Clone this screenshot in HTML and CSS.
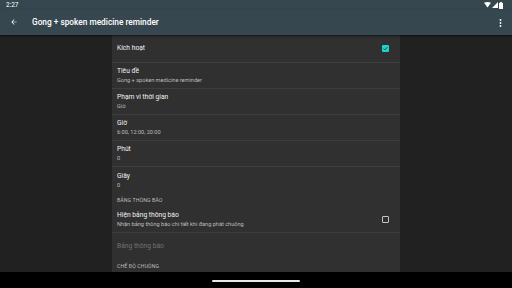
FILE: index.html
```html
<!DOCTYPE html>
<html lang="vi">
<head>
<meta charset="utf-8">
<link rel="stylesheet" href="styles.css">
</head>
<body>
<div class="screen">
  <div class="statusbar">
    <span class="time">2:27</span>
    <span class="sys">
      <svg width="7" height="6" viewBox="0 0 7 6"><path d="M0 0.8 Q3.5 -0.6 7 0.8 L3.5 5.5 Z" fill="#fff"/></svg>
      <svg width="6" height="6" viewBox="0 0 6 6"><path d="M6 0 L6 6 L0 6 Z" fill="#fff"/></svg>
      <svg width="4" height="7" viewBox="0 0 4 7"><rect x="1.2" y="0" width="1.6" height="1" fill="#fff"/><rect x="0" y="0.8" width="4" height="6.2" rx="0.5" fill="#fff"/></svg>
    </span>
  </div>
  <div class="toolbar">
    <svg class="back" width="8" height="8" viewBox="0 0 24 24"><path d="M20 11H7.83l5.59-5.59L12 4l-8 8 8 8 1.41-1.41L7.83 13H20v-2z" fill="#fff"/></svg>
    <span class="title">Gong + spoken medicine reminder</span>
    <svg class="more" width="3" height="8" viewBox="0 0 3 8"><circle cx="1.5" cy="1" r="0.9" fill="#fff"/><circle cx="1.5" cy="4" r="0.9" fill="#fff"/><circle cx="1.5" cy="7" r="0.9" fill="#fff"/></svg>
  </div>
  <div class="content">
    <div class="card">
      <div class="row first">
        <div class="texts"><div class="t">Kích hoạt</div></div>
        <div class="cb checked"><svg width="7" height="7" viewBox="0 0 7 7"><path d="M1.6 3.6 L2.9 4.9 L5.4 2.2" stroke="#1f3b3a" stroke-width="0.9" fill="none"/></svg></div>
      </div>
      <div class="row">
        <div class="texts"><div class="t">Tiêu đề</div><div class="s">Gong + spoken medicine reminder</div></div>
      </div>
      <div class="row">
        <div class="texts"><div class="t">Phạm vi thời gian</div><div class="s">Giờ</div></div>
      </div>
      <div class="row">
        <div class="texts"><div class="t">Giờ</div><div class="s">6:00, 12:00, 20:00</div></div>
      </div>
      <div class="row">
        <div class="texts"><div class="t">Phút</div><div class="s">0</div></div>
      </div>
      <div class="row nodiv">
        <div class="texts"><div class="t">Giây</div><div class="s">0</div></div>
      </div>
      <div class="cat">BẢNG THÔNG BÁO</div>
      <div class="row">
        <div class="texts"><div class="t">Hiện bảng thông báo</div><div class="s">Nhận bảng thông báo chi tiết khi đang phát chuông</div></div>
        <div class="cb"></div>
      </div>
      <div class="row nodiv">
        <div class="texts"><div class="t disabled">Bảng thông báo</div></div>
      </div>
      <div class="cat">CHẾ ĐỘ CHUÔNG</div>
    </div>
  </div>
  <div class="navbar"><div class="handle"></div></div>
</div>
</body>
</html>
```
FILE: styles.css
```css
* { box-sizing: border-box; }
html, body { margin: 0; padding: 0; }
body {
  width: 512px;
  height: 288px;
  overflow: hidden;
  background: #212121;
  font-family: Roboto, "Noto Sans", sans-serif;
  color: #fff;
}
.screen {
  display: flex;
  flex-direction: column;
  height: 288px;
}
.statusbar {
  height: 10px;
  background: #37474f;
  display: flex;
  align-items: center;
  justify-content: space-between;
  padding: 0 9px 0 6px;
}
.time { font-size: 6.4px; color: #fff; line-height: 1; }
.sys { display: flex; align-items: center; gap: 1px; }
.toolbar {
  height: 25px;
  background: #37474f;
  display: flex;
  align-items: center;
  padding: 0 10px 0 10px;
  box-shadow: 0 1px 2px rgba(0,0,0,0.6);
  position: relative;
  z-index: 1;
}
.back { margin-right: 14px; margin-top: -1px; }
.title {
  flex: 1;
  font-size: 8.3px;
  font-weight: 500;
  color: #fff;
  margin-top: -1px;
}
.content {
  flex: 1;
  display: flex;
  justify-content: center;
  overflow: hidden;
  min-height: 0;
}
.card {
  width: 288px;
  background: #303030;
  display: flex;
  flex-direction: column;
  flex-shrink: 0;
}
.row {
  height: 26px;
  flex-shrink: 0;
  display: flex;
  align-items: center;
  padding: 0 11px 0 5px;
  border-bottom: 1px solid #3d3d3d;
}
.row.first { height: 28px; }
.row.nodiv { border-bottom: none; }
.texts { flex: 1; display: flex; flex-direction: column; }
.t { font-size: 6.7px; color: #f2f2f2; line-height: 9px; }
.t.disabled { color: #707070; }
.s { font-size: 5.6px; color: #bdbdbd; line-height: 8px; }
.cat {
  height: 14px;
  flex-shrink: 0;
  font-size: 5.2px;
  color: #bdbdbd;
  padding-left: 5px;
  display: flex;
  align-items: center;
  letter-spacing: 0.1px;
}
.cb {
  width: 7px;
  height: 7px;
  border: 1px solid #c4c4c4;
  border-radius: 1px;
  flex-shrink: 0;
}
.cb.checked {
  border: none;
  background: #1ad3cb;
  display: flex;
}
.navbar {
  height: 16px;
  background: #000;
  display: flex;
  justify-content: center;
  padding-top: 8px;
  flex-shrink: 0;
}
.handle {
  width: 88px;
  height: 2px;
  background: #e8e8e8;
  border-radius: 1px;
}
```
